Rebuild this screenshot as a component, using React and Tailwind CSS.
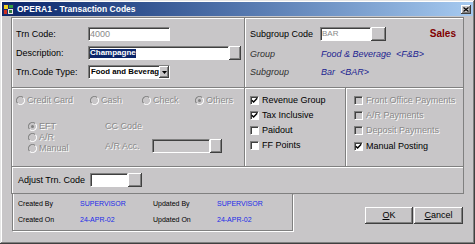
import React from "react";

const sunken =
  "border border-t-[#808080] border-l-[#808080] border-b-white border-r-white shadow-[inset_1px_1px_0_#404040]";
const raised =
  "bg-[#c8c6c8] shadow-[inset_-1px_-1px_0_#404040,inset_1px_1px_0_#fff,inset_-2px_-2px_0_#808080]";
const dis = "text-[#8a8a8a] [text-shadow:1px_1px_0_#fff]";

function Radio({ checked }) {
  return (
    <svg width="9" height="9" viewBox="0 0 12 12" className="shrink-0">
      <circle cx="6" cy="6" r="5" fill="#c8c6c8" />
      <path d="M2.2 9.8 A5.3 5.3 0 0 1 9.8 2.2" stroke="#808080" strokeWidth="1.4" fill="none" />
      <path d="M9.8 2.2 A5.3 5.3 0 0 1 2.2 9.8" stroke="#ffffff" strokeWidth="1.4" fill="none" />
      {checked && <circle cx="6" cy="6" r="2" fill="#808080" />}
    </svg>
  );
}

function Check({ checked, disabled }) {
  return (
    <div
      className={`w-[9px] h-[9px] shrink-0 flex items-center justify-center ${sunken} ${
        disabled ? "bg-[#c8c6c8]" : "bg-white"
      }`}
    >
      {checked && (
        <svg width="7" height="7" viewBox="0 0 7 7">
          <path d="M0.8 3.2 L2.6 5 L6.2 1.2" stroke="#000" strokeWidth="1.4" fill="none" />
        </svg>
      )}
    </div>
  );
}

function Icon() {
  return (
    <svg width="11" height="11" viewBox="0 0 11 11" className="shrink-0">
      <rect x="0" y="0" width="11" height="11" fill="#1c2a6a" />
      <rect x="1" y="1" width="4" height="4" fill="#f0d020" />
      <rect x="6" y="1" width="4" height="3" fill="#30a040" />
      <rect x="1" y="6" width="3" height="4" fill="#d03020" />
      <rect x="5" y="5" width="5" height="5" fill="#e8e8e8" />
      <rect x="6" y="6" width="3" height="3" fill="#308040" />
    </svg>
  );
}

function BrowseBtn({ w, h }) {
  return <div className={`${raised} ${w} ${h} shrink-0`} />;
}

export default function App() {
  return (
    <div className="w-[475px] h-[244px] bg-[#c8c6c8] font-['Liberation_Sans',Arial,sans-serif] text-[9px] leading-none text-black flex flex-col p-[2px] overflow-hidden shadow-[inset_-1px_-1px_0_#404040,inset_1px_1px_0_#e6e6e6,inset_-2px_-2px_0_#808080,inset_2px_2px_0_#fff]">
      {/* Title bar */}
      <div className="h-[14px] shrink-0 flex items-center bg-linear-to-r from-[#0a246a] to-[#a6caf0] pl-[1px] pr-[2px]">
        <Icon />
        <span className="ml-[3px] text-white font-bold text-[8.5px]">
          OPERA1 - Transaction Codes
        </span>
        <div className={`ml-auto w-[10px] h-[9px] ${raised} flex items-center justify-center`}>
          <svg width="6" height="5" viewBox="0 0 6 5">
            <path d="M0.5 0.5 L5.5 4.5 M5.5 0.5 L0.5 4.5" stroke="#000" strokeWidth="1.2" />
          </svg>
        </div>
      </div>

      {/* Main frame */}
      <div className="ml-[9px] mt-[1px] w-[453px] h-[177px] shrink-0 border border-[#808080] shadow-[inset_1px_1px_0_#fff] flex flex-col">
        {/* Top */}
        <div className="h-[70px] shrink-0 flex border-b border-[#808080]">
          <div className="w-[233px] shrink-0 border-r border-[#808080] shadow-[1px_0_0_#fff] flex flex-col pt-[9px] pl-[4px] gap-[5px]">
            <div className="h-[14px] flex items-center">
              <span className="w-[72px]">Trn Code:</span>
              <div className={`w-[82px] h-[14px] bg-white ${sunken} flex items-center pl-[1px] text-[#8a8a8a]`}>
                4000
              </div>
            </div>
            <div className="h-[14px] flex items-center">
              <span className="w-[72px]">Description:</span>
              <div className={`w-[141px] h-[14px] bg-white ${sunken} flex items-center pl-[1px]`}>
                <span className="bg-[#0a246a] text-white font-bold text-[8px] h-[9px] flex items-center">
                  Champagne
                </span>
              </div>
              <BrowseBtn w="w-[12px]" h="h-[14px]" />
            </div>
            <div className="h-[14px] flex items-center">
              <span className="w-[72px]">Trn.Code Type:</span>
              <div className={`w-[82px] h-[14px] bg-white ${sunken} flex items-center`}>
                <span className="flex-1 whitespace-nowrap font-bold text-[7.8px] pl-[2px]">
                  Food and Beverag
                </span>
                <div className={`w-[10px] h-[12px] ${raised} flex items-center justify-center shrink-0`}>
                  <svg width="5" height="3" viewBox="0 0 5 3">
                    <path d="M0 0 H5 L2.5 3 Z" fill="#000" />
                  </svg>
                </div>
              </div>
            </div>
          </div>
          <div className="flex-1 flex flex-col pt-[9px] pl-[5px] pr-[7px]">
            <div className="h-[14px] flex items-center">
              <span className="w-[70px]">Subgroup Code</span>
              <div className={`w-[51px] h-[14px] bg-white ${sunken} flex items-center pl-[1px] text-[8px] text-[#8a8a8a]`}>
                BAR
              </div>
              <BrowseBtn w="w-[15px]" h="h-[14px]" />
              <span className="ml-auto text-[#800000] font-bold text-[10px]">Sales</span>
            </div>
            <div className="h-[14px] mt-[6px] flex items-center italic">
              <span className="w-[71px] text-[#303030]">Group</span>
              <span className="text-[#1c2490]">Food &amp; Beverage&nbsp; &lt;F&amp;B&gt;</span>
            </div>
            <div className="h-[14px] mt-[4px] flex items-center italic">
              <span className="w-[71px] text-[#303030]">Subgroup</span>
              <span className="text-[#1c2490]">Bar&nbsp; &lt;BAR&gt;</span>
            </div>
          </div>
        </div>

        {/* Middle */}
        <div className="h-[79px] shrink-0 flex border-b border-[#808080] shadow-[inset_0_1px_0_#fff]">
          <div className="w-[233px] shrink-0 border-r border-[#808080] shadow-[1px_0_0_#fff] flex flex-col pt-[7px] pl-[4px]">
            <div className={`h-[10px] flex items-center ${dis}`}>
              <div className="w-[74px] flex items-center gap-[2px]">
                <Radio />
                <span>Credit Card</span>
              </div>
              <div className="w-[52px] flex items-center gap-[2px]">
                <Radio />
                <span>Cash</span>
              </div>
              <div className="w-[53px] flex items-center gap-[2px]">
                <Radio />
                <span>Check</span>
              </div>
              <div className="flex items-center gap-[2px]">
                <Radio checked />
                <span>Others</span>
              </div>
            </div>
            <div className={`mt-[16px] flex pl-[12px] ${dis}`}>
              <div className="w-[77px] flex flex-col">
                <div className="h-[11px] flex items-center gap-[2px]">
                  <Radio checked />
                  <span>EFT</span>
                </div>
                <div className="h-[11px] flex items-center gap-[2px]">
                  <Radio />
                  <span>A/R</span>
                </div>
                <div className="h-[11px] flex items-center gap-[2px]">
                  <Radio />
                  <span>Manual</span>
                </div>
              </div>
              <div className="flex flex-col">
                <div className="h-[11px] flex items-center">CC Code</div>
                <div className="h-[14px] mt-[7px] flex items-center">
                  <span className="w-[47px]">A/R Acc.</span>
                  <div className={`w-[58px] h-[14px] bg-[#c8c6c8] ${sunken}`} />
                  <BrowseBtn w="w-[12px]" h="h-[14px]" />
                </div>
              </div>
            </div>
          </div>
          <div className="w-[101px] shrink-0 border-r border-[#808080] shadow-[1px_0_0_#fff] flex flex-col pt-[5px] pl-[5px]">
            {[
              ["Revenue Group", true],
              ["Tax Inclusive", true],
              ["Paidout", false],
              ["FF Points", false],
            ].map(([t, c]) => (
              <div key={t} className="h-[15px] flex items-center gap-[3px]">
                <Check checked={c} />
                <span>{t}</span>
              </div>
            ))}
          </div>
          <div className="flex-1 flex flex-col pt-[5px] pl-[8px]">
            {["Front Office Payments", "A/R Payments", "Deposit Payments"].map((t) => (
              <div key={t} className="h-[15px] flex items-center gap-[3px]">
                <Check disabled />
                <span className={dis}>{t}</span>
              </div>
            ))}
            <div className="h-[15px] mt-[1px] flex items-center gap-[3px]">
              <Check checked />
              <span>Manual Posting</span>
            </div>
          </div>
        </div>

        {/* Bottom */}
        <div className="flex-1 flex items-center pl-[6px] shadow-[inset_0_1px_0_#fff]">
          <span className="w-[72px]">Adjust Trn. Code</span>
          <div className={`w-[38px] h-[14px] bg-white ${sunken}`} />
          <BrowseBtn w="w-[14px]" h="h-[14px]" />
        </div>
      </div>

      {/* Footer */}
      <div className="flex shrink-0">
        <div className="ml-[10px] w-[281px] h-[37px] border-x border-b border-[#808080] shadow-[inset_1px_0_0_#fff,1px_1px_0_#fff] flex flex-col pt-[4px] pl-[5px] text-[7px]">
          <div className="h-[10px] flex items-center">
            <span className="w-[62px]">Created By</span>
            <span className="w-[73px] text-[#1a2ae8]">SUPERVISOR</span>
            <span className="w-[64px]">Updated By</span>
            <span className="text-[#1a2ae8]">SUPERVISOR</span>
          </div>
          <div className="h-[10px] mt-[6px] flex items-center">
            <span className="w-[62px]">Created On</span>
            <span className="w-[73px] text-[#1a2ae8]">24-APR-02</span>
            <span className="w-[64px]">Updated On</span>
            <span className="text-[#1a2ae8]">24-APR-02</span>
          </div>
        </div>
        <div className="ml-[72px] mt-[13px] flex gap-[1px]">
          <div className={`w-[48px] h-[17px] ${raised} flex items-center justify-center`}>
            <span>
              <span className="underline">O</span>K
            </span>
          </div>
          <div className={`w-[49px] h-[17px] ${raised} flex items-center justify-center`}>
            <span>
              <span className="underline">C</span>ancel
            </span>
          </div>
        </div>
      </div>
    </div>
  );
}
